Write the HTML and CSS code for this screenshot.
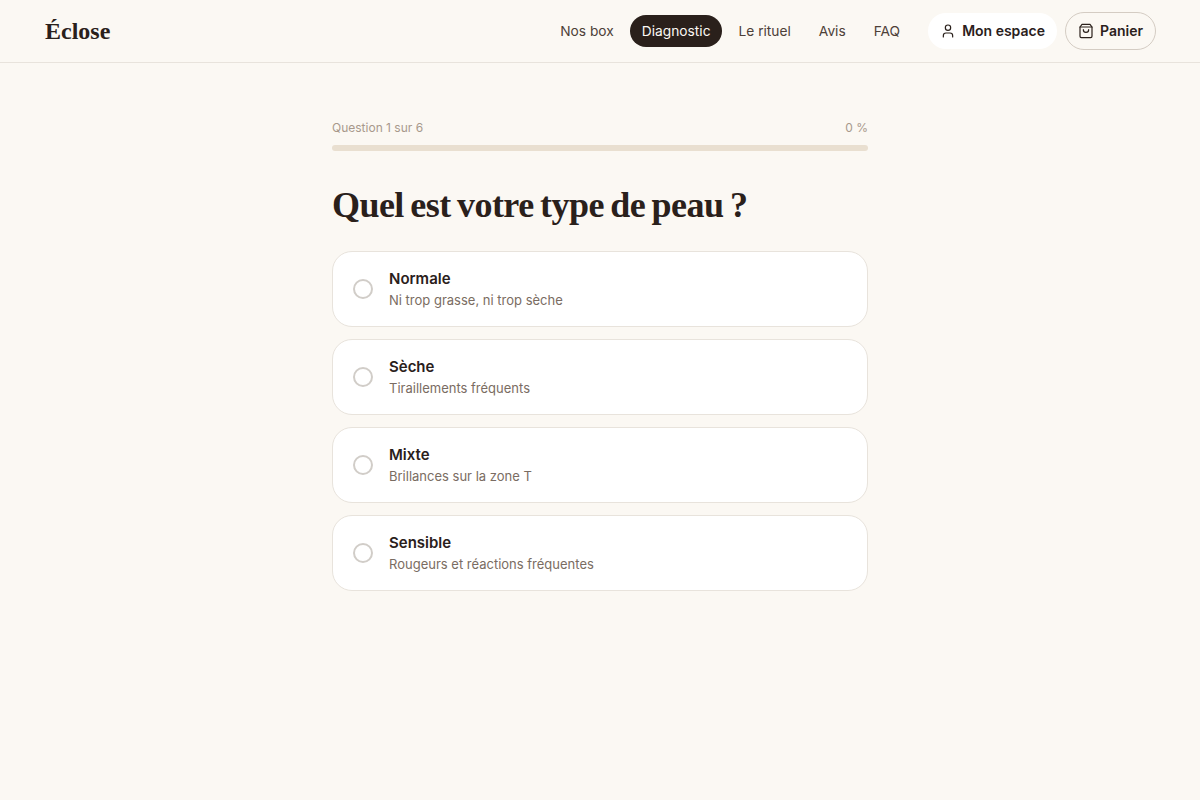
FILE: index.html
```html
<!DOCTYPE html>
<html lang="fr">
<head>
  <meta charset="UTF-8" />
  <meta name="viewport" content="width=device-width, initial-scale=1" />
  <title>Éclose - Diagnostic</title>
  <link rel="stylesheet" href="styles.css">
</head>
<body>

  <header class="entete">
    <a class="logo" href="#">Éclose</a>
    <nav class="nav">
      <a class="nav-lien" href="#">Nos box</a>
      <a class="nav-lien actif" href="#">Diagnostic</a>
      <a class="nav-lien" href="#">Le rituel</a>
      <a class="nav-lien" href="#">Avis</a>
      <a class="nav-lien" href="#">FAQ</a>
    </nav>
    <div class="actions">
      <a class="btn-espace" href="#">
        <svg class="icone" viewBox="0 0 24 24" aria-hidden="true">
          <circle cx="12" cy="7" r="4" />
          <path d="M19 21v-2a4 4 0 0 0-4-4H9a4 4 0 0 0-4 4v2" />
        </svg>
        Mon espace
      </a>
      <a class="btn-panier" href="#">
        <svg class="icone" viewBox="0 0 24 24" aria-hidden="true">
          <path d="M6 2 3 6v14a2 2 0 0 0 2 2h14a2 2 0 0 0 2-2V6l-3-4Z" />
          <path d="M3 6h18" />
          <path d="M16 10a4 4 0 0 1-8 0" />
        </svg>
        Panier
      </a>
    </div>
  </header>

  <main class="quiz">
    <div class="progression-texte">
      <span>Question 1 sur 6</span>
      <span>0 %</span>
    </div>
    <div class="progression-barre"></div>

    <h1>Quel est votre type de peau ?</h1>

    <div class="options">
      <button class="option">
        <span class="radio"></span>
        <span class="option-info">
          <strong>Normale</strong>
          <span>Ni trop grasse, ni trop sèche</span>
        </span>
      </button>
      <button class="option">
        <span class="radio"></span>
        <span class="option-info">
          <strong>Sèche</strong>
          <span>Tiraillements fréquents</span>
        </span>
      </button>
      <button class="option">
        <span class="radio"></span>
        <span class="option-info">
          <strong>Mixte</strong>
          <span>Brillances sur la zone T</span>
        </span>
      </button>
      <button class="option">
        <span class="radio"></span>
        <span class="option-info">
          <strong>Sensible</strong>
          <span>Rougeurs et réactions fréquentes</span>
        </span>
      </button>
    </div>
  </main>

</body>
</html>
```

FILE: styles.css
```css
* { box-sizing: border-box; }
body {
  font-family: Inter, sans-serif;
  background: #fbf8f3;
  color: #2a201b;
  margin: 0;
}

a {
  color: inherit;
  text-decoration: none;
}

.entete {
  display: flex;
  align-items: center;
  height: 63px;
  padding: 0 44px;
  border-bottom: 1px solid #e8e3dc;
}

.logo {
  font-family: 'Liberation Serif', serif;
  font-size: 24px;
  font-weight: 700;
  padding-left: 1px;
  margin-right: auto;
}

.nav {
  display: flex;
  align-items: center;
  gap: 4px;
  margin-right: 16px;
}

.nav-lien {
  padding: 8px 12px;
  border-radius: 999px;
  font-size: 13.75px;
  line-height: 16px;
  color: #4d4038;
}

.nav-lien.actif {
  background: #2a201b;
  color: #fbf8f3;
}

.actions {
  display: flex;
  align-items: center;
  gap: 8px;
}

.btn-espace,
.btn-panier {
  display: flex;
  align-items: center;
  gap: 6px;
  border-radius: 999px;
  font-size: 14px;
  line-height: 16px;
  font-weight: 600;
  color: #2a201b;
}

.btn-espace {
  background: white;
  height: 36px;
  padding: 0 12px;
}

.btn-panier {
  height: 38px;
  padding: 0 12px;
  border: 1px solid #d4ccc3;
}

.icone {
  width: 16px;
  height: 16px;
  fill: none;
  stroke: currentColor;
  stroke-width: 1.8;
  stroke-linecap: round;
  stroke-linejoin: round;
}

.quiz {
  width: 536px;
  margin: 0 auto;
  padding-top: 57px;
}

.progression-texte {
  display: flex;
  justify-content: space-between;
  font-size: 12px;
  line-height: 16px;
  color: #a8998c;
  margin-bottom: 9px;
}

.progression-barre {
  height: 6px;
  border-radius: 999px;
  background: #e9dfd0;
  margin-bottom: 34px;
}

h1 {
  font-family: 'Liberation Serif', serif;
  font-size: 36px;
  line-height: 40px;
  font-weight: 700;
  letter-spacing: -0.55px;
  word-spacing: -2px;
  margin: 0 0 26px;
}

.options {
  display: flex;
  flex-direction: column;
  gap: 12px;
}

.option {
  display: flex;
  align-items: center;
  gap: 16px;
  width: 100%;
  height: 76px;
  padding: 0 20px;
  background: white;
  border: 1px solid #e8e3dc;
  border-radius: 20px;
  font-family: inherit;
  text-align: left;
  cursor: pointer;
}

.radio {
  width: 20px;
  height: 20px;
  border: 2px solid #d1cdc8;
  border-radius: 50%;
}

.option-info {
  display: flex;
  flex-direction: column;
}

.option-info strong {
  font-size: 15px;
  line-height: 22px;
  font-weight: 600;
  color: #2a201b;
}

.option-info span {
  font-size: 13px;
  line-height: 20px;
  color: #7a6c62;
}
```
